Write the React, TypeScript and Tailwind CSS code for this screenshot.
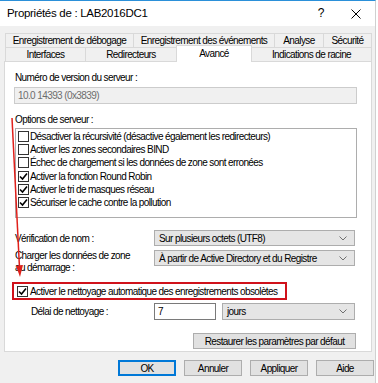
import React from "react"

function Check({ checked }: { checked?: boolean }) {
  return (
    <span className="flex h-[11px] w-[11px] shrink-0 items-center justify-center border border-[#333333] bg-white">
      {checked && (
        <svg width="9" height="9" viewBox="0 0 9 9">
          <path d="M1 4.5 L3.5 7 L8 1.5" fill="none" stroke="#000" strokeWidth="1.6" />
        </svg>
      )}
    </span>
  )
}

function Chevron() {
  return (
    <svg width="8" height="5" viewBox="0 0 8 5" className="shrink-0">
      <path d="M0.5 0.5 L4 4 L7.5 0.5" fill="none" stroke="#707070" strokeWidth="1" />
    </svg>
  )
}

function Select({ value, className }: { value: string; className: string }) {
  return (
    <div className={`flex items-center justify-between border border-[#adadad] bg-[#e5e5e5] pl-[4px] pr-[7px] ${className}`}>
      <span>{value}</span>
      <Chevron />
    </div>
  )
}

function Tab({ label, w }: { label: string; w: string }) {
  return (
    <div className={`flex h-[14px] items-center justify-center border-l border-t border-r border-[#d9d9d9] bg-[#f0f0f0] -mr-px ${w}`}>
      {label}
    </div>
  )
}

function Btn({ label, primary }: { label: string; primary?: boolean }) {
  return (
    <div
      className={`flex h-[16px] w-[58px] items-center justify-center bg-[#e1e1e1] ${
        primary ? "border-2 border-[#0078d7]" : "border border-[#adadad]"
      }`}
    >
      {label}
    </div>
  )
}

const options = [
  { label: "Désactiver la récursivité (désactive également les redirecteurs)", on: false },
  { label: "Activer les zones secondaires BIND", on: false },
  { label: "Échec de chargement si les données de zone sont erronées", on: false },
  { label: "Activer la fonction Round Robin", on: true },
  { label: "Activer le tri de masques réseau", on: true },
  { label: "Sécuriser le cache contre la pollution", on: true },
]

export default function App() {
  return (
    <div className="relative h-[383px] w-[378px] overflow-hidden bg-white font-['Liberation_Sans',Arial,sans-serif] text-[10px] leading-[13px] tracking-[-0.6px] text-black">
      <div className="flex h-full w-[376px] flex-col border-t border-r border-t-[#2b90d9] border-r-[#d0d0d0]">
        {/* title bar */}
        <div className="flex h-[25px] shrink-0 items-center bg-white pl-[7px] pr-[14px] text-[11.5px] tracking-[-0.3px]">
          <span className="flex-1">Propriétés de : LAB2016DC1</span>
          <span className="mr-[27px] text-[12px]">?</span>
          <svg width="10" height="10" viewBox="0 0 10 10">
            <path d="M0.5 0.5 L9.5 9.5 M9.5 0.5 L0.5 9.5" stroke="#000" strokeWidth="1" />
          </svg>
        </div>

        {/* body */}
        <div className="flex flex-1 flex-col bg-[#f0f0f0] pt-[7px]">
          <div className="px-[4px]">
            <div className="ml-[1px] flex">
              <Tab label="Enregistrement de débogage" w="w-[129px]" />
              <Tab label="Enregistrement des événements" w="w-[142px]" />
              <Tab label="Analyse" w="w-[50px]" />
              <Tab label="Sécurité" w="w-[49px]" />
            </div>
            <div className="ml-[1px] flex h-[14px] items-end">
              <Tab label="Interfaces" w="w-[81px]" />
              <Tab label="Redirecteurs" w="w-[92px]" />
              <div className="relative z-10 -mr-px -mb-px flex h-[17px] w-[76px] items-start justify-center border-l border-t border-r border-[#d9d9d9] bg-white pt-[1px]">
                Avancé
              </div>
              <Tab label="Indications de racine" w="w-[121px]" />
            </div>

            {/* panel */}
            <div className="flex h-[291px] w-[368px] flex-col border border-[#d9d9d9] bg-white pl-[10px] pt-[9px]">
              <div>Numéro de version du serveur :</div>
              <div className="mt-[3px] flex h-[17px] w-[343px] -ml-px items-center border border-[#cccccc] bg-[#f0f0f0] pl-[3px] text-[#6d6d6d]">
                10.0 14393 (0x3839)
              </div>
              <div className="mt-[9px]">Options de serveur :</div>
              <div className="mt-[2px] h-[90px] w-[342px] border border-[#adadad] bg-white pl-[2px] pt-[1px]">
                {options.map((o) => (
                  <div key={o.label} className="flex h-[13.2px] items-center gap-[1px]">
                    <Check checked={o.on} />
                    <span>{o.label}</span>
                  </div>
                ))}
              </div>

              <div className="mt-[12px] flex h-[16px] items-center">
                <span className="w-[139px]">Vérification de nom :</span>
                <Select value="Sur plusieurs octets (UTF8)" className="h-[16px] w-[201px]" />
              </div>
              <div className="mt-[4px] flex items-start">
                <span className="w-[139px] leading-[12px]">
                  Charger les données de zone
                  <br />
                  au démarrage :
                </span>
                <Select value="À partir de Active Directory et du Registre" className="h-[16px] w-[201px]" />
              </div>

              <div className="relative mt-[8px] flex h-[18px] items-center pl-[2px]">
                <Check checked />
                <span className="ml-[2px]">Activer le nettoyage automatique des enregistrements obsolètes</span>
                <div className="absolute -left-[3px] top-0 h-[18px] w-[275px] border-2 border-[#d0121b]" />
              </div>

              <div className="mt-[3px] flex h-[17px] items-center">
                <span className="w-[139px] pl-[16px]">Délai de nettoyage :</span>
                <div className="flex h-[17px] w-[62px] items-center border border-[#7a7a7a] bg-white pl-[3px]">7</div>
                <Select value="jours" className="ml-[6px] h-[17px] w-[133px]" />
              </div>

              <div className="mt-[13px] flex justify-end pr-[15px]">
                <div className="flex h-[16px] w-[163px] items-center justify-center border border-[#adadad] bg-[#e1e1e1]">
                  Restaurer les paramètres par défaut
                </div>
              </div>
            </div>
          </div>

          <div className="mt-[8px] flex justify-end gap-[8px] pr-[1px]">
            <Btn label="OK" primary />
            <Btn label="Annuler" />
            <Btn label="Appliquer" />
            <Btn label="Aide" />
          </div>
        </div>
      </div>

      {/* red annotation arrow */}
      <svg className="pointer-events-none absolute left-0 top-0" width="378" height="383" viewBox="0 0 378 383">
        <path d="M12 118 L19.5 268" fill="none" stroke="#e0201b" strokeWidth="1.5" />
        <path d="M16 266 L20 277 L23 265 Z" fill="#e0201b" />
      </svg>
    </div>
  )
}
